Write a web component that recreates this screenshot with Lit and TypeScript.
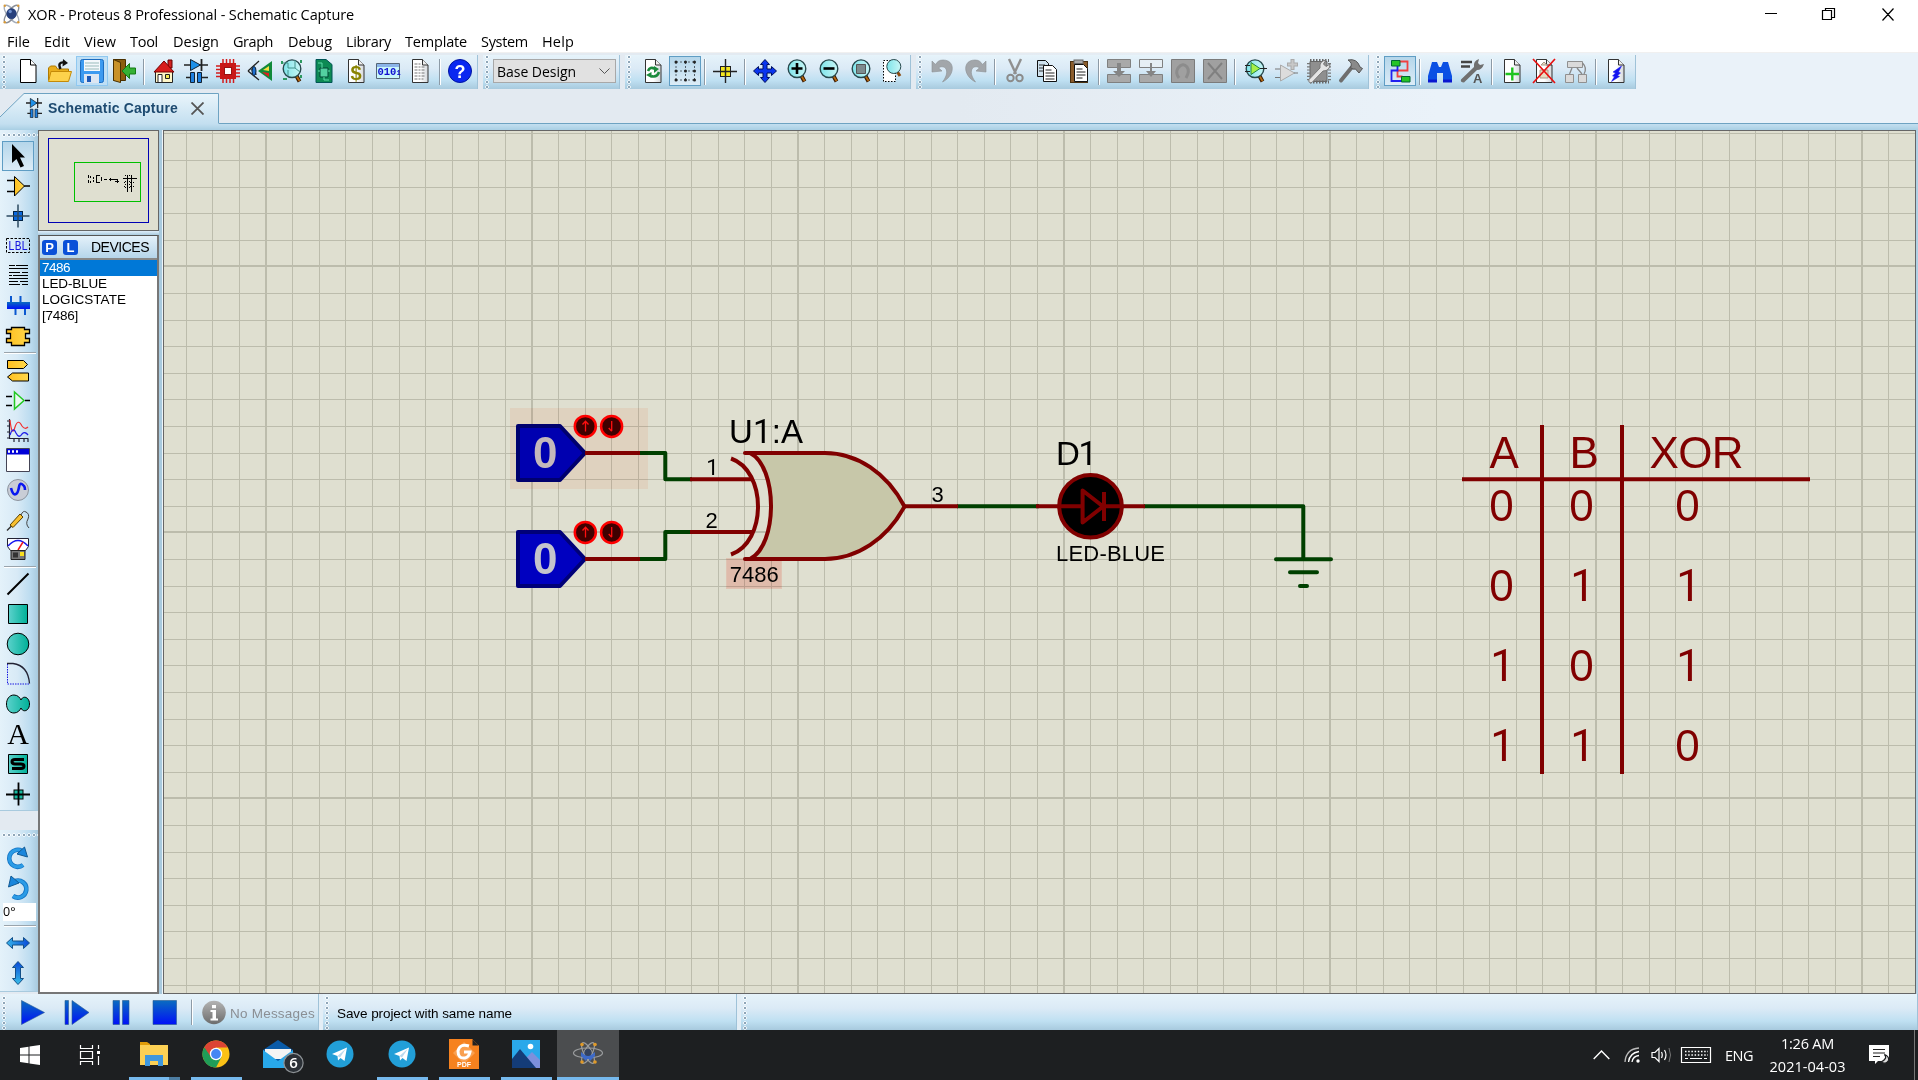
import { LitElement, html, css, svg, nothing } from "lit";
import { customElement, property } from "lit/decorators.js";

/** Text run spaced out to an exact advance width. */
@customElement("fit-label")
class FitLabel extends LitElement {
  @property() text = "";
  @property({ type: Number }) width = 0;
  static styles = css`
    :host { display: inline-block; white-space: pre; }
    .run { display: inline-block; }
  `;
  firstUpdated() {
    const run = this.renderRoot.querySelector(".run") as HTMLElement;
    const natural = run.getBoundingClientRect().width;
    if (natural && this.width) {
      run.style.letterSpacing = `${(this.width - natural) / this.text.length}px`;
    }
  }
  render() {
    return html`<span class="run">${this.text}</span>`;
  }
}

const doc = svg`<path d="M4.500 .5h10l5.500 5.500v17.500h-15.500z" fill="url(#paper)" stroke="#333"/><path d="M14.500 .5v5.500h5.500" fill="#eee" stroke="#333"/>`;
const lens = (inner: unknown) => svg`<g transform="translate(2 0)">
  <path d="M14 16l3.500 6.500" stroke="#3a1a00" stroke-width="4"/><path d="M14.500 17l3 5" stroke="#b86a10" stroke-width="1.800"/>
  <circle cx="10" cy="9.700" r="8.800" fill="url(#glass)" stroke="#27484c" stroke-width="1.400"/>${inner}</g>`;
const capDiode = svg`
  <path d="M0 6h24M2 18.500h7M15 18.500h9" stroke="#222" stroke-width="1.600"/>
  <path d="M6.500 .5l10 5.500-10 5.500z" fill="#1e90e8" stroke="#123"/><path d="M17.500 0v12" stroke="#222" stroke-width="1.800"/>
  <path d="M6.500 13.500h4v10h-4zM13.500 13.500h4v10h-4z" fill="#1e80e0" stroke="#123"/>`;
const block = (y: number, h: number) => svg`<path d="M.5 ${y}.5h23v${h}h-23z" fill="#a9a9a9" stroke="#808080"/>`;

const icons: Record<string, unknown> = {
  fresh: svg`<path d="M4.500 .5h10l5.500 5.500v17.500h-15.500z" fill="#fff" stroke="#000"/><path d="M14.500 .5v5.500h5.500" fill="#fff" stroke="#000"/>`,
  open: svg`<path d="M.5 21V9l2-2h5l2 3h11v11z" fill="#e9ae1c" stroke="#b07a00"/><path d="M.5 22.500l2.500-10h20.500l-3 10z" fill="#fdd24c" stroke="#c48a08"/><path d="M12.500 10C10 5 12 3 16 3.500" fill="none" stroke="#111" stroke-width="2.400"/><path d="M15 0l5 4-5.500 3.500z" fill="#111"/>`,
  save: svg`<rect x=".5" y=".5" width="23" height="23" rx="2" fill="#3d9af0" stroke="#1c6cc0"/><rect x="4" y="1" width="16" height="11" fill="#f4f8fc"/><path d="M5 4h14M5 7h14M5 10h14" stroke="#9bb" /><rect x="4" y="15" width="15" height="9" fill="#dde6f2"/><rect x="7" y="17" width="4" height="6" fill="#1b58b8"/>`,
  exit: svg`<path d="M1.500 .5h12v21h-12z" fill="#8a5d10" stroke="#4a3000"/><path d="M1.500 .5l7 3v20l-7-2z" fill="#c8922a" stroke="#4a3000"/><path d="M23.500 9v6h-6v4.500L10 12l7.500-7.500V9z" fill="#35b135" stroke="#157a15"/>`,
  home: svg`<path d="M16 1h4v8h-4z" fill="#d02020" stroke="#600"/><path d="M3.500 12h17v11.500h-17z" fill="#fff6c8" stroke="#222"/><path d="M12 2L2 13h20z" fill="#d81c1c" stroke="#700"/><path d="M6 15.500h4v8H6z" fill="#fff" stroke="#222"/><path d="M13.500 15.500h4v4h-4z" fill="#f4e850" stroke="#222"/>`,
  schem: capDiode,
  chip: svg`<path d="M7 0v24M10.500 0v24M14 0v24M17.500 0v24M0 7h24M0 10.500h24M0 14h24M0 17.500h24" stroke="#d21c1c" stroke-width="1.500"/><rect x="4" y="4" width="16" height="16" fill="#c81818"/><rect x="8.500" y="8.500" width="7" height="7" fill="#fff" stroke="#911"/>`,
  eye: svg`<path d="M0 12L11 2M0 12l11 9M3 11q4-2 5 5" stroke="#222" fill="none" stroke-width="1.300"/><ellipse cx="6" cy="12" rx="2" ry="4.500" fill="#1e70d0" stroke="#123"/><path d="M10 12L24 2v20z" fill="#118a3a"/><path d="M15 11l6-4v5z" fill="#f4e040"/><path d="M14 13l7 1v4z" fill="#e02020"/>`,
  board: svg`${lens(svg`<path d="M1 4h5v5h7M13 1v8l5 4M6 17v-6" stroke="#43938c" fill="none"/>`)}<path d="M2 2v3M21 1v3M3 20h4M21 16v3" stroke="#2d9a60" stroke-width="2"/>`,
  green: svg`<path d="M4 .5h10l6 5v18H4z" fill="#0d8a54" stroke="#055"/><path d="M8 9h8v9H8z" fill="#53d0a0" stroke="#043"/><path d="M6 4h4v5M6 12h2M16 12h2M12 18v3h5" stroke="#5fdca8" fill="none"/>`,
  bill: svg`${doc}<text x="12" y="21" font-size="20" font-weight="700" text-anchor="middle" fill="#8a8400" font-family="Liberation Sans, sans-serif">$</text>`,
  bits: svg`<path d="M.5 4.500h23v15H.5z" fill="#c8f6fa" stroke="#567"/><path d="M1 5h22v3H1z" fill="#8ab4e8"/><text x="1.500" y="16" font-size="10.500" font-weight="700" fill="#1010d0" font-family="Liberation Mono, monospace">010<tspan font-size="7">1</tspan></text>`,
  report: svg`${doc}<path d="M6.500 5h6M6.500 8h11M6.500 11h11M6.500 14h11M6.500 17h11M6.500 20h9" stroke="#777" stroke-width="1.100" stroke-dasharray="3 1 2 1"/>`,
  help: svg`<circle cx="12" cy="12" r="11.500" fill="#0a28f0" stroke="#0014a0"/><text x="12" y="18.500" font-size="18" font-weight="700" text-anchor="middle" fill="#fff" font-family="Liberation Sans, sans-serif">?</text>`,
  redraw: svg`${doc}<path d="M7 12q2-5 7-2M18 13q-2 6-8 4" fill="none" stroke="#1b8a3c" stroke-width="2.600"/><path d="M13 7l5 3-5 4zM10.500 13v6L5 16z" fill="#1b8a3c"/>`,
  dots: svg`<path d="M3 3h19M3 12h19M3 21h19M3 3v18M12.500 3v18M21.500 3v18" stroke="#55606a" stroke-dasharray="2 2"/><g fill="#222">${[3, 12, 21].map((y) => [3, 12.5, 21.5].map((x) => svg`<circle cx=${x} cy=${y} r="1.500"/>`))}</g>`,
  origin: svg`<rect x="7.500" y="7.500" width="10" height="10" fill="#f6e81e" stroke="#222"/><path d="M0 12.500h24M12.500 0v24" stroke="#222" stroke-width="1.400"/>`,
  pan: svg`<path d="M12 .5l4.500 5h-2.500V10h4.500V7.500l5 4.500-5 4.500V14H14v4.500h2.500L12 23.500 7.500 18.500H10V14H5.500v2.500L.5 12l5-4.500V10H10V5.500H7.500z" fill="#0b35ee" stroke="#001060"/>`,
  zin: lens(svg`<path d="M4.500 9.500h11M10 4v11" stroke="#000" stroke-width="2.600"/>`),
  zout: lens(svg`<path d="M4.500 9.500h11" stroke="#000" stroke-width="2.600"/>`),
  zall: lens(svg`<path d="M5.500 5.500h9v9h-9z" fill="#7d8c8e" stroke="#555"/>`),
  zarea: svg`<path d="M2.500 1.500h12v21h-12z" fill="#fff" stroke="#000" stroke-dasharray="1.500 1.500"/><path d="M16.500 13l2.500 4" stroke="#8a4a10" stroke-width="3"/><circle cx="12.800" cy="7.500" r="7" fill="url(#glass)" stroke="#27484c"/>`,
  undo: svg`<path d="M1 2v11l10-1-3.500-3.200C14 5 20 12 11.500 23 24 17 25 1 12 1 8 1 6 3 4.500 5.500z" fill="#a2a6aa" stroke="#8b9094" stroke-width=".6"/>`,
  redo: svg`<path d="M23 2v11l-10-1 3.500-3.200C10 5 4 12 12.500 23 0 17-1 1 12 1c4 0 6 2 7.500 4.500z" fill="#a2a6aa" stroke="#8b9094" stroke-width=".6"/>`,
  cut: svg`<path d="M6 0l7 15M18 0l-7 15" stroke="#909090" stroke-width="2.400"/><circle cx="7.500" cy="19" r="3.200" fill="none" stroke="#8b8b8b" stroke-width="2"/><circle cx="16.500" cy="19" r="3.200" fill="none" stroke="#8b8b8b" stroke-width="2"/>`,
  copy: svg`<path d="M2.500 1.500h8l3 3v13h-11z" fill="#cfe2ee" stroke="#111"/><path d="M4 6h6M4 9h6M4 12h6" stroke="#333"/><path d="M8.500 6.500h9l4 4v12h-13z" fill="#fff" stroke="#111"/><path d="M10.500 11h6M10.500 14h9M10.500 17h9M10.500 20h9" stroke="#222"/>`,
  paste: svg`<rect x="3.500" y="2.500" width="17" height="21" fill="#8a5c2c" stroke="#4a3010"/><path d="M7.500 5.500h9l4 4v13h-13z" fill="#fff" stroke="#111"/><path d="M9.500 10h6M9.500 13h9M9.500 16h9M9.500 19h6" stroke="#222"/><rect x="7" y="1" width="9" height="3.500" fill="#aaa" stroke="#666"/>`,
  blkcopy: svg`${block(0, 8)}${block(15, 8)}<path d="M10 4h4v8h4l-6 6-6-6h4z" fill="#858585"/>`,
  blkmove: svg`<path d="M.5 .5h23v8H.5z" fill="#e6eef4" stroke="#808080"/>${block(15, 8)}<path d="M11 4h2v8h4l-5 6-5-6h4z" fill="#858585"/>`,
  blkrot: svg`<path d="M.5 .5h23v23H.5z" fill="#a0a0a0" stroke="#7b7b7b"/><path d="M8 19q-4-5-1-10 5-6 9-1 3 4-1 11" fill="none" stroke="#8c8c8c" stroke-width="3"/>`,
  blkdel: svg`<path d="M.5 .5h23v23H.5z" fill="#a0a0a0" stroke="#7b7b7b"/><path d="M5 4l14 16M19 4L5 20" stroke="#808080" stroke-width="2"/>`,
  pick: lens(svg`<path d="M6 3.500l9 6-9 6z" fill="#a6f048" stroke="#284"/><path d="M0 6.500h5M0 12.500h5M15 9.500h7" stroke="#222"/>`),
  make: svg`<path d="M5.500 6l14 8-14 8z" fill="#dcdcdc" stroke="#aaa"/><path d="M0 10h5M0 18.500h5M19 14h4" stroke="#777"/><path d="M17.500 0v11M12 5.500h11" stroke="#aaa" stroke-width="4"/><path d="M17.500 1v9M13 5.500h9" stroke="#c8c8c8" stroke-width="2"/>`,
  pack: svg`<path d="M3 2.500h17v20H3z" fill="#8f8f8f" stroke="#666"/><path d="M3 1.500h19M3 23h19" stroke="#666" stroke-width="3" stroke-dasharray="1.500 1.500"/><path d="M1.500 4v18M22.500 4v18" stroke="#777" stroke-width="3" stroke-dasharray="1.200 2"/><path d="M2 20.500L13 9q-1-7 6-8l-2.500 4 2.500 2.500L23 5q0 7-7 7L5 23.500q-4 1-3-3z" fill="#e4e4e4" stroke="#777"/>`,
  hammer: svg`<path d="M2 21.500L13 8" stroke="#6e6e6e" stroke-width="4" stroke-linecap="round"/><path d="M9 1q9-2 12 7l2.500 1.500-3.500 4.500-3.500-4q-2.500 1-5-1.500Q14 4 9 1z" fill="#8a8a8a" stroke="#555"/>`,
  auto: svg`<path d="M12 2.500h7.500v9h-10v6h5" fill="none" stroke="#f04040" stroke-width="1.800"/><path d="M9.500 7v4.500H3.500v10.500H13" fill="none" stroke="#2020f0" stroke-width="1.800"/><path d="M3.500 1.500h8.500v5.500H3.500zM13.500 17.500h8.500v5.500h-8.500z" fill="#25c425" stroke="#063"/>`,
  find: svg`<path d="M4 3h5l2 5h2l2-5h5l4 14v4h-9v-7h-6v7H0v-4z" fill="#0a50e4"/><path d="M0 22h9M15 22h9" stroke="#0a18d0" stroke-width="3"/>`,
  props: svg`<path d="M1 3h11M1 7.500h9" stroke="#444" stroke-width="2.600"/><path d="M1 20.500L14 8q-1-6 5-8l-1 4 2 2 4-1q-2 6-7 6L4 23.500q-4 0-3-3z" fill="#707070"/><text x="13" y="24" font-size="13" font-weight="700" fill="#555" font-family="Liberation Sans, sans-serif">A</text>`,
  sheetadd: svg`${doc}<path d="M5.500 15h13.500M12.300 8.500v13" stroke="#1fc41f" stroke-width="2.400"/>`,
  sheetdel: svg`${doc}<path d="M9 6l3-3 3 3zM8 11h8v8H8z" fill="#e8dcc0" stroke="#a98"/><path d="M1 0l22 24M23 0L1 24" stroke="#e81010" stroke-width="1.700"/>`,
  hier: svg`<path d="M3.500 2.500h15v6h-15zM1.500 15.500h8v8h-8zM14.500 15.500h8v8h-8z" fill="#dadada" stroke="#909090"/><path d="M8 9l-2.500 6M18.500 4q5 5 1.500 11M13 9l5 6" fill="none" stroke="#888" stroke-width="1.300"/>`,
  erc: svg`${doc}<path d="M17.500 7l-8.500 6 2.500 1-3 3 2 .5-3 5 8-5-2-1 3-2.500-2-1z" fill="#1414f0" stroke="#1414f0" stroke-width=".5"/>`,

  arrow: svg`<path d="M6 0v19l4.500-4 4 8.500 3.500-1.500-4-8.500h5z" fill="#000"/>`,
  comp: svg`<path d="M1 6.500h7M1 17.500h7M18 12h6" stroke="#000" stroke-width="1.300"/><path d="M8.500 2.500l10 9.500-10 10z" fill="url(#gold)" stroke="#000"/>`,
  junction: svg`<rect x="7.500" y="7.500" width="9" height="9" fill="#0868e0" stroke="#024"/><path d="M.5 12h23M12 .5v23" stroke="#2c4a60" stroke-width="1.500"/>`,
  label: svg`<path d="M.5 4.500h23v14H.5z" fill="none" stroke="#000" stroke-dasharray="2.500 1.500"/><text x="2" y="16" font-size="12.500" fill="#1616e0" font-family="Liberation Mono, monospace" textLength="20" lengthAdjust="spacingAndGlyphs">LBL</text>`,
  script: svg`<g stroke="#000"><path d="M3 1.500h6M10 1.500h12M3 4.500h19M3 8.500h11M16 8.500h6M3 11.500h3M7 11.500h15M3 14.500h19M3 17.500h9M14 17.500h8M3 20.500h11M16 20.500h6" /></g>`,
  bus: svg`<path d="M1 8h23v7H1z" fill="url(#bluev)"/><path d="M5 2v6M14.500 2v6M9.500 15v6M19 15v6" stroke="#0a58d0" stroke-width="2"/>`,
  sub: svg`<path d="M5.500 3.500h13v2h5v4h-4v5h4v4h-5v3h-13v-3h-5v-4h4v-5h-4v-4h5z" fill="url(#gold)" stroke="#000" stroke-width="1.300"/>`,
  term: svg`<path d="M1.500 2.500h16l4 4-4 4h-16z" fill="url(#gold)" stroke="#000"/><path d="M22.500 15h-16l-5 4 5 4h16z" fill="url(#gold)" stroke="#000"/>`,
  pin: svg`<path d="M0 8.500h6M0 17.500h6M19 12.500h5" stroke="#000" stroke-width="1.300"/><path d="M8.500 4l9.500 8.500-9.500 8.500z" fill="#e8f8f0" stroke="#22c822" stroke-width="1.500"/>`,
  graph: svg`<path d="M3.500 1v20M3.500 20.500h19M1 3h2M1 8h2M1 14h2M1 20h2M8 21v3M13 21v3M18 21v3M22 21v3" stroke="#223" stroke-width="1.200"/><path d="M4 2q2 18 5 7 3-9 7-1 3 4 6 1" fill="none" stroke="#f03030" stroke-width="1.200"/><path d="M4 17q3-9 6-2 3 6 6 1 3-3 6 1" fill="none" stroke="#2020e8" stroke-width="1.300"/>`,
  popup: svg`<path d="M.5 .5h23v23H.5z" fill="#fff" stroke="#445"/><path d="M1 1h22v5.500H1z" fill="#0000d8"/><path d="M2 3.500h2M6 3.500h2M10 3.500h2" stroke="#fff" stroke-width="2.500"/>`,
  gen: svg`<circle cx="12" cy="12" r="10.500" fill="#c9cdd6" stroke="#8d949e"/><path d="M5 10q2 8 5 6 2-1 3-7t5-1q1 1 1 4" fill="none" stroke="#0a18f0" stroke-width="2.600"/>`,
  probe: svg`<path d="M1 22.500l5-5" stroke="#333" stroke-width="1.500"/><path d="M4 17L14 6l3 3L7 19.500z" fill="#f8c030" stroke="#5a4000"/><path d="M15 7q2-5 5-3 4 2 2 7-3 5 1 9" fill="none" stroke="#444"/>`,
  meter: svg`<path d="M1.500 .5h21v8l-3 4h-15l-3-4z" fill="#fff" stroke="#223"/><path d="M2 8Q12-3 22 8" fill="none" stroke="#1818f0" stroke-width="1.500"/><path d="M12 12l5-8" stroke="#f01818" stroke-width="1.500"/><path d="M5 12.500h14v9H5z" fill="#777" stroke="#222"/><path d="M7 14.500h5v5H7z" fill="#333"/><path d="M14 14h4v4h-4z" fill="#f8e020"/>`,
  line: svg`<path d="M1.500 22.500l21-21" stroke="#000" stroke-width="2"/>`,
  box: svg`<path d="M2.500 2.500h19v19h-19z" fill="url(#teal)" stroke="#000"/>`,
  circle: svg`<circle cx="12" cy="12" r="10.800" fill="url(#teal)" stroke="#000"/>`,
  arc: svg`<path d="M1.500 2v20h22" fill="none" stroke="#1818e0" stroke-dasharray="1.500 1"/><path d="M1 1.500h6q15 2 16.500 20" fill="none" stroke="#223" stroke-width="1.300"/>`,
  path: svg`<path d="M8 3C-2 3-2 21 8 21c4 0 6-3 7-5 2 5 8.500 3 8.500-4S17 3 15 8c-1-2-3-5-7-5z" fill="url(#teal)" stroke="#000"/>`,
  text: svg`<text x="12" y="22" font-size="30" text-anchor="middle" font-family="Liberation Serif, serif">A</text>`,
  symbol: svg`<path d="M2.500 2.500h19v19h-19z" fill="url(#teal)" stroke="#000"/><path d="M18 7.500h-9q-3 0-3 2.200t3 2.300h6q3 0 3 2.200t-3 2.300H6" fill="none" stroke="#000" stroke-width="3"/>`,
  marker: svg`<rect x="8" y="8" width="9" height="9" fill="#18b8a0" stroke="#000"/><path d="M0 12.500h24M12.500 .5v23" stroke="#000" stroke-width="1.800"/>`,
  cw: svg`<path d="M17 19A8.500 8.500 0 1 1 16 5" fill="none" stroke="#1474c4" stroke-width="4.600"/><path d="M17 19A8.500 8.500 0 1 1 16 5" fill="none" stroke="#2c9ce6" stroke-width="3"/><path d="M18.500 1l3 10-10.500-3z" fill="#1a86dc" stroke="#125a94"/>`,
  ccw: svg`<path d="M7 20A8.500 8.500 0 1 0 9 5" fill="none" stroke="#1474c4" stroke-width="4.600"/><path d="M7 20A8.500 8.500 0 1 0 9 5" fill="none" stroke="#2c9ce6" stroke-width="3"/><path d="M5 0L2.500 11 13 7z" fill="#1a86dc" stroke="#125a94"/>`,
  fliph: svg`<path d="M.5 12l6-5.500v3.500h11V6.500l6 5.500-6 5.500V14h-11v3.500z" fill="url(#blueh)" stroke="#135088"/>`,
  flipv: svg`<path d="M12 .5l5.500 6H14.500v11h3L12 23.500l-5.500-6h3v-11h-3z" fill="url(#bluev2)" stroke="#135088"/>`,
};

const glyph = (name: string) => html`<svg class="icon" viewBox="0 0 24 24" width="24" height="24">${icons[name]}</svg>`;

const WIRE = "#004000";
const PART = "#800000";

@customElement("schematic-sheet")
class SchematicSheet extends LitElement {
  static styles = css`
    :host { display: block; overflow: hidden; background: #dfdfd0; }
    svg { display: block; }
    text { font-family: "Liberation Sans", Arial, sans-serif; }
    .one { font-family: Roboto, "Liberation Sans", sans-serif; }
    .truth text { font-size: 44px; fill: #800000; }
    .tint { mix-blend-mode: multiply; }
  `;

  private grid() {
    const lines = [];
    for (let k = 6; k < 73; k++) {
      const major = k % 10 === 0;
      lines.push(svg`<rect x=${major ? 26.6 * k - 1 : Math.floor(26.6 * k + 0.001)} y="131" width=${major ? 2 : 1} height="862"/>`);
    }
    for (let k = 5; k < 38; k++) {
      const major = k % 10 === 0;
      lines.push(svg`<rect x="164" y=${major ? 26.6 * k - 1 : Math.ceil(26.6 * k - 0.001)} width="1751" height=${major ? 2 : 1}/>`);
    }
    return svg`<g fill="#bcbcac" shape-rendering="crispEdges">${lines}</g>`;
  }

  private state(y: number) {
    return svg`
      <path d="M518 ${y - 27}h42l25 27-25 27h-42z" fill="#0000c0" stroke="#000078" stroke-width="4" stroke-linejoin="round"/>
      <text x="545.300" y=${y + 15} font-size="44" font-weight="700" text-anchor="middle" fill="#c4c4cc">0</text>
      <g fill="#400000" stroke="#ff0000" stroke-width="2.500"><circle cx="585.300" cy=${y - 26.6} r="10.500"/><circle cx="611.600" cy=${y - 26.6} r="10.500"/></g>
      <path d="M585.500 ${y - 21.5}v-10m-3 3l3-3.200 3 3.200M611.700 ${y - 32}v10m-3-3l3 3.200" fill="none" stroke="#ff1010" stroke-width="1.300"/>`;
  }

  private truth() {
    const rows = ["000", "011", "101", "110"];
    const xs = [1501.5, 1581.5, 1687.6];
    return svg`<g class="truth">
      <path d="M1542 425v349M1622 425v349M1462 479.300h348" stroke=${PART} stroke-width="4"/>
      <text x="1489.600" y="468">A</text><text x="1569.500" y="468">B</text><text x="1649.500" y="468" textLength="94">XOR</text>
      ${rows.map((r, i) => [...r].map((c, j) => svg`<text class=${c === "1" ? "one" : ""} x=${xs[j] + (c === "1" ? 1 : 0)} y=${520.5 + 80 * i} text-anchor="middle">${c}</text>`))}
    </g>`;
  }

  render() {
    return html`<svg width="1751" height="862" viewBox="164 131 1751 862">
      <path d="M164 131h1751v862H164z" fill="#dfdfd0"/>
      ${this.grid()}
      ${this.state(453)}
      ${this.state(559)}
      <g fill="none" stroke-width="4" stroke=${WIRE} stroke-linejoin="round">
        <path d="M638 453h27.300v26.300H692M638 559h27.300v-27H692M957 506.300h82M1144 506.300h159.300V559"/>
        <path d="M1276 559.200h55M1290 572.300h27M1300 586h7" stroke-linecap="round"/>
      </g>
      <g fill="none" stroke-width="4" stroke=${PART} stroke-linejoin="round">
        <path d="M585 453h55M585 559h55M690 479.300h63M690 532h63M904 506.300h54"/>
        <path d="M745 453h80C857 453 887 473 904.500 506.500C887 539 857 559 825 559H745h5C778 545 778 467 750 453z" fill="#c7c7a9"/>
        <path d="M731 458.500C767 471 767 542 731 554.500"/>
        <circle cx="1090.500" cy="506.300" r="31.300" fill="#000"/>
        <path d="M1036 506.300h47M1104 506.300h41M1082.600 490.500v32l20.500-16zM1104 492v29"/>
      </g>
      <text class="one" x="712.500" y="475" font-size="22" text-anchor="middle">1</text>
      <text x="711.700" y="528" font-size="22" text-anchor="middle">2</text>
      <text x="937.600" y="501.500" font-size="22" text-anchor="middle">3</text>
      <text x="729" y="442.500" font-size="33" textLength="74">U<tspan class="one">1</tspan>:A</text>
      <text x="1056" y="465" font-size="33" textLength="41">D<tspan class="one">1</tspan></text>
      <text x="1056" y="561" font-size="22" textLength="109">LED-BLUE</text>
      <text x="729.800" y="582" font-size="22" textLength="49">7486</text>
      <rect class="tint" x="726.500" y="558.500" width="55" height="30" fill="#ffd6d2" stroke="#ffe0dc"/>
      <rect class="tint" x="510.500" y="408.500" width="137" height="80" fill="#fff0ea" stroke="#fff0ea"/>
      ${this.truth()}
    </svg>`;
  }
}

const MENU: [string, number, number][] = [
  ["File", 37, 23], ["Edit", 40, 26], ["View", 46, 32], ["Tool", 43, 28], ["Design", 60, 46], ["Graph", 55, 40],
  ["Debug", 58, 44], ["Library", 59, 45], ["Template", 76, 62], ["System", 61, 47], ["Help", 46, 32],
];

const MAIN_BARS: { w: number; grip: number; items: string[] }[] = [
  { w: 478, grip: 12, items: ["fresh", "open", "save*", "exit", "|", "home", "schem", "chip", "eye", "board", "green", "bill", "bits", "report", "|", "help"] },
  { w: 137, grip: 10, items: ["combo"] },
  { w: 286, grip: 12, items: ["redraw", "dots#", "|", "origin", "|", "pan", "zin", "zout", "zall", "zarea"] },
  { w: 453, grip: 11, items: ["undo", "redo", "|", "cut", "copy", "paste", "|", "blkcopy", "blkmove", "blkrot", "blkdel", "|", "pick", "make", "pack", "hammer"] },
  { w: 262, grip: 10, items: ["auto#", "|", "find", "props", "|", "sheetadd", "sheetdel", "hier", "|", "erc"] },
];

const SIDE = ["arrow#", "comp", "junction", "label", "script", "bus", "sub", "|", "term", "pin", "graph", "popup", "gen", "probe", "meter", "|",
  "line", "box", "circle", "arc", "path", "text", "symbol", "marker"];

const atom = svg`
  <g fill="none" stroke-width="2"><ellipse cx="14" cy="14" rx="15" ry="6" transform="rotate(50 14 14)" stroke="#a4adba"/><ellipse cx="14" cy="14" rx="15" ry="6" transform="rotate(-50 14 14)" stroke="#8a8f98"/></g>
  <circle cx="14" cy="13.500" r="7.500" fill="#27407c"/><circle cx="12" cy="10.500" r="2.500" fill="#6e8fce"/>
  <g fill="#d89a38"><circle cx="4" cy="2.500" r="1.800"/><circle cx="24" cy="2.500" r="1.800"/><circle cx="4" cy="25.500" r="1.800"/><circle cx="24" cy="25.500" r="1.800"/></g>`;

const telegram = svg`<circle cx="14" cy="14" r="13.500" fill="#229fd8"/><path d="M6 14L21 7.500 18.500 21l-4-3-2.500 2.500-.5-4.500z" fill="#fff"/><path d="M11.500 16L20 8.500l-6 9z" fill="#b9d9ee"/>`;

const TASKS: { art: unknown; run?: string }[] = [
  { art: svg`<path d="M0 2h7l3 2v20H0z" fill="#e09c08"/><path d="M0 5h28v20H0z" fill="#fcd054"/><path d="M5 26V15h18v11h-5v-5h-8v5z" fill="#3f97dd"/>`, run: "split" },
  { art: svg`<circle cx="14" cy="14" r="13.500" fill="#fbc116"/><path d="M14 14L2.300 7.200A13.500 13.500 0 0 0 14 27.500L19.500 17z" fill="#1f9d58"/><path d="M2.300 7.200A13.500 13.500 0 0 1 25.700 7.500H14L9 17z" fill="#dc4434"/><circle cx="14" cy="14" r="6.200" fill="#fff"/><circle cx="14" cy="14" r="4.900" fill="#4486f4"/>`, run: "on" },
  { art: svg`<path d="M-1 10L14 0l15 10v18H-1z" fill="#0a5ba8"/><path d="M1 9h26v10H1z" fill="#f4f4f4"/><path d="M-1 10l15 11 15-11v18H-1z" fill="#28a8ea"/><circle cx="29.500" cy="23" r="9.600" fill="#2b3036" stroke="#8d9296" stroke-width="1.200"/><text x="29.500" y="28.300" font-size="15" font-weight="600" text-anchor="middle" fill="#fff" font-family="Open Sans, sans-serif">6</text>` },
  { art: telegram },
  { art: telegram, run: "on" },
  { art: svg`<path d="M-1-1h23l7 7v23H-1z" fill="#f6821f"/><path d="M22-1v7h7" fill="#222" stroke="#f6821f"/><path d="M14 2l11 11-11 11L3 13z" fill="#f9a050"/><path d="M19 6q-9-3-11 5 0 8 7 7 4-1 5-6h-6" fill="none" stroke="#fff" stroke-width="3"/><text x="14" y="27" font-size="7" font-weight="700" text-anchor="middle" fill="#fff" font-family="Liberation Sans, sans-serif">PDF</text>`, run: "on" },
  { art: svg`<path d="M0 0h28v28H0z" fill="#2aa8ea"/><path d="M14 18l6-6 8 8v8H14z" fill="#7d90dc"/><path d="M0 19L8 9l16 19H0z" fill="#143c78"/><circle cx="18.500" cy="6.500" r="2.800" fill="#fff"/>`, run: "on" },
  { art: svg`<g fill="none" stroke="#9a9c9e" stroke-width="1.200"><ellipse cx="14" cy="13" rx="14.500" ry="5"/><ellipse cx="14" cy="13" rx="11.500" ry="4" transform="rotate(62 14 13)"/><ellipse cx="14" cy="13" rx="11.500" ry="4" transform="rotate(-62 14 13)"/></g><path d="M7 12l4 3h6l4-3v4l-5 5-1-2h-2l-1 2-5-5z" fill="#3d6ac8"/><circle cx="14" cy="12.500" r="3.500" fill="#33425e"/><g fill="#e09a28"><circle cx="8" cy="4.500" r="1.800"/><circle cx="21" cy="4.500" r="1.800"/><circle cx="8" cy="22" r="1.800"/><circle cx="21" cy="22" r="1.800"/></g>`, run: "active" },
];

@customElement("app-root")
class AppRoot extends LitElement {
  static styles = css`
    :host { display: block; width: 1918px; height: 1080px; overflow: hidden; font-family: "Open Sans", "Noto Sans", sans-serif; color: #000; --bar: linear-gradient(#e6f3fa, #dbeaf6 40%, #bfe0f2 75%, #a8cade); --vbar: linear-gradient(90deg, #e4f2fa, #d8eaf6 45%, #bcdcf0 80%, #a8cade); }
    * { box-sizing: border-box; }
    .window { display: flex; flex-direction: column; width: 1918px; height: 1080px; background: #e3eaf1; }
    .defs { display: block; width: 0; height: 0; flex: none; }
    .icon { display: block; overflow: visible; }
    .title { display: flex; align-items: center; height: 30px; background: #fff; padding: 0 0 2px 2px; font-size: 14.500px; flex: none; }
    .title .name { margin-left: 7px; flex: 1; }
    .winbtns { display: flex; }
    .winbtns svg { display: block; }
    .menu { display: flex; align-items: center; height: 22px; background: #fff; padding-left: 7px; font-size: 14.500px; flex: none; }
    .entry { display: block; flex: none; }
    .bars { display: flex; gap: 5px; height: 37px; padding-top: 2px; flex: none; background: linear-gradient(90deg, #e3eaf1 50%, #eaf2f9 75%); border-top: 1px solid #f0f0f0; }
    .bar { display: flex; align-items: stretch; background: var(--bar); border-right: 1px solid #9fc2d8; height: 34px; flex: none; }
    .grip { width: 12px; flex: none; background: radial-gradient(circle at 2px 2px, #8fa6b8 1px, #fff 1.400px, transparent 2px) 2px 0 / 5px 5px repeat-y; }
    .btn { width: 32px; height: 30px; margin-top: 1px; display: grid; place-items: center; flex: none; border: 1px solid transparent; }
    .btn.hot { background: #bfdff5; border-color: #90c8f0; }
    .btn.down { background: linear-gradient(#b5d6ea, #dcecf7); border-color: #5f9dc4; }
    .sep { width: 8px; flex: none; display: flex; justify-content: center; padding: 4px 0; }
    .sep::before { content: ""; width: 2px; background: linear-gradient(90deg, #8d9aa6 50%, #fff 50%); }
    .combo { display: flex; align-items: center; justify-content: space-between; width: 123px; height: 24px; margin-top: 4px; border: 1px solid #a8a8a8; background: #e1e1e1; padding: 0 5px 0 3px; font-size: 14px; }
    .tabs { display: flex; height: 35px; flex: none; background: linear-gradient(90deg, #e3eaf1 50%, #eaf2f9 75%); }
    .tab { display: grid; width: 219px; }
    .tab > * { grid-area: 1 / 1; }
    .tabfill { flex: 1; border-bottom: 1px solid #6ea3c2; }
    .tabrow { display: flex; align-items: center; padding: 3px 0 0 26px; font: 700 14px "Liberation Sans", Arial, sans-serif; color: #1d4a70; }
    .tabrow fit-label { margin-left: 6px; width: 130px; }
    .tabrow .close { margin-left: 13px; }
    .strip { height: 6px; background: linear-gradient(#c3dff0, #a9cfe4); flex: none; }
    .main { display: flex; height: 864px; flex: none; }
    .side { width: 38px; display: flex; flex-direction: column; }
    .vbar { background: var(--vbar); border-bottom: 1px solid #a8cade; padding-left: 2px; }
    .vbar.tools { height: 681px; }
    .vbar.turn { height: 162px; margin-top: 19px; }
    .vgrip { height: 11px; background: radial-gradient(circle at 2px 2px, #8fa6b8 1px, #fff 1.400px, transparent 2px) 0 3px / 5px 5px repeat-x; }
    .turn .vgrip { height: 13px; }
    .vbar .btn { margin: 0; }
    .vsep { height: 4px; margin: 0 2px; background: linear-gradient(transparent 25%, #9aa4ac 25% 50%, #fff 50% 75%, transparent 75%); }
    .angle { height: 18px; width: 33px; margin: 0 0 3px 1px; background: #fff; font-size: 12.500px; line-height: 17px; }
    .panel { width: 121px; display: flex; flex-direction: column; }
    .mini { height: 101px; border: 1px solid #666; background: #dfdfd0; flex: none; }
    .mini svg { display: block; }
    .gap { height: 4px; background: linear-gradient(#dfeefa, #a9cade); flex: none; }
    .list { flex: 1; border: 2px solid #777; border-top: 1px solid #555; background: #fff; font-family: "Liberation Sans", Arial, sans-serif; font-size: 13.500px; }
    .head { display: flex; align-items: center; height: 24px; background: linear-gradient(#e4f1fa, #b5d5ea); border-bottom: 2px solid #888; padding-left: 2px; font-size: 14px; }
    .tag { width: 15px; height: 15px; border-radius: 3px; background: #0a50d8; color: #fff; font-weight: 700; font-size: 13px; line-height: 15px; text-align: center; margin-right: 6px; }
    .head fit-label { margin-left: 7px; }
    .dev { height: 16px; line-height: 16px; padding-left: 2px; }
    .dev.sel { background: #0078d7; color: #fff; }
    .split { width: 4px; background: linear-gradient(90deg, #a9cade 70%, #eef5fa 70%); }
    .frame { border: 1px solid #666; width: 1753px; }
    .edge { flex: 1; background: #b0d0e4; }
    .status { display: flex; height: 36px; gap: 4px; flex: none; font: 13.500px "Liberation Sans", Arial, sans-serif; background: #e3eef6; }
    .status .bar { height: 36px; align-items: center; }
    .status .grip { height: 34px; align-self: flex-end; }
    .status fit-label { padding-top: 2px; }
    .run { width: 319px; }
    .status .hint { width: 414px; }
    .status .rest { flex: 1; }
    .muted { color: #8b8f94; margin-left: 2px; }
    .hint fit-label { margin-left: 2px; }
    .taskbar { display: flex; height: 50px; background: #1d1f21; flex: none; color: #fff; }
    .cell { width: 62px; display: grid; place-items: center; flex: none; }
    .cell svg { display: block; overflow: visible; }
    .lead { width: 60px; }
    .lead + .task { margin-left: 3px; }
    .task { grid-template-rows: 47px 3px; width: 62px; }
    .under { width: 51px; height: 3px; background: #76b9ed; }
    .split-run { background: linear-gradient(90deg, #76b9ed 78%, #4d7da2 78%); }
    .active { background: #4b4d4f; }
    .active .under { width: 62px; }
    .space { flex: 1; }
    .tray { display: flex; align-items: center; width: 325px; font-size: 14.500px; flex: none; }
    .tray svg { display: block; flex: none; }
    .eng { margin-left: 13px; width: 29px; }
    .clock { display: flex; flex-direction: column; align-items: center; width: 77px; margin-left: 15px; }
    .clock fit-label { height: 23px; line-height: 24px; }
    .note { margin-left: 23px; }
    .show { width: 4px; height: 50px; border-left: 1px solid #777; margin-left: auto; }
  `;

  private tool(code: string) {
    if (code === "|") return html`<div class="sep"></div>`;
    if (code === "combo")
      return html`<div class="combo"><fit-label text="Base Design" width="79"></fit-label>
        <svg width="11" height="7"><path d="M.5 .5l5 5 5-5" fill="none" stroke="#555"/></svg></div>`;
    const name = code.replace(/[*#]/, "");
    const mode = code.endsWith("*") ? "btn hot" : code.endsWith("#") ? "btn down" : "btn";
    return html`<div class=${mode}>${glyph(name)}</div>`;
  }

  private defs() {
    return html`<svg class="defs"><defs>
      <linearGradient id="paper"><stop offset=".5" stop-color="#fff"/><stop offset="1" stop-color="#d4d8dc"/></linearGradient>
      <linearGradient id="glass"><stop offset="0" stop-color="#7fe4ea"/><stop offset="1" stop-color="#c8f6f6"/></linearGradient>
      <linearGradient id="gold"><stop offset="0" stop-color="#ffc020"/><stop offset="1" stop-color="#ffd84c"/></linearGradient>
      <linearGradient id="teal"><stop offset="0" stop-color="#5cd2cc"/><stop offset="1" stop-color="#00b098"/></linearGradient>
      <linearGradient id="blueh"><stop offset="0" stop-color="#38b4e8"/><stop offset="1" stop-color="#0848d8"/></linearGradient>
      <linearGradient id="bluev" x2="0" y2="1"><stop offset="0" stop-color="#0a6cc0"/><stop offset="1" stop-color="#0010f8"/></linearGradient>
      <linearGradient id="bluev2" x2="0" y2="1"><stop offset="0" stop-color="#0848d8"/><stop offset="1" stop-color="#38c0e8"/></linearGradient>
      <linearGradient id="tabfill" x2="0" y2="1"><stop offset="0" stop-color="#eaf5fb"/><stop offset="1" stop-color="#c3dff0"/></linearGradient>
      <linearGradient id="ball" x2="0" y2="1"><stop offset="0" stop-color="#b4b4b4"/><stop offset="1" stop-color="#6c6c6c"/></linearGradient>
    </defs></svg>`;
  }

  private mini() {
    return html`<svg width="119" height="99" viewBox="39 131 119 99">
      <rect x="48.500" y="138.500" width="100" height="84" fill="none" stroke="#0000b4"/>
      <rect x="74.500" y="162.500" width="66" height="39" fill="none" stroke="#00c000"/>
      <g stroke="#000" fill="none" shape-rendering="crispEdges">
        <path d="M88.500 175v3M88.500 180v3M90.500 176v2M90.500 181v2M93.500 177v2M93.500 180v2M96.500 175v8M96.500 175.500h3M96.500 182.500h3M101.500 177v4M104 179.500h3M109 179.500h9M110.500 178v3M117.500 179v4M115 181.500h4"/>
        <path d="M123 178.500h14M127.500 175v17M131.500 175v17"/><path d="M125.500 175v14M129.500 175v14" stroke-dasharray="1 2"/><path d="M124 182.500h10M124 186.500h10" stroke-dasharray="1 2"/>
      </g></svg>`;
  }

  private taskbar() {
    return html`<div class="taskbar">
      <div class="cell lead"><svg width="20" height="20"><path d="M0 3l8.500-1.200v7.700H0zM9.500 1.600L20 0v9.500H9.500zM0 10.500h8.500v7.700L0 17zM9.500 10.500H20V20L9.500 18.500z" fill="#fff"/></svg></div>
      <div class="cell lead"><svg width="20" height="20"><path d="M.5 0v3.500h12V0M.5 20v-3.500h12V20M.5 6.500h12v7H.5zM18.500 0v4M18.500 11v9" fill="none" stroke="#fff" stroke-width="1.200"/><path d="M17 6h3v3h-3z" fill="#fff"/></svg></div>
      ${TASKS.map((t) => html`<div class="cell task ${t.run === "active" ? "active" : ""}">
        <svg width="28" height="28">${t.art}</svg>
        ${t.run ? html`<div class="under ${t.run === "split" ? "split-run" : ""}"></div>` : nothing}</div>`)}
      <div class="space"></div>
      <div class="tray">
        <svg width="17" height="10"><path d="M.7 9L8.500 1l7.800 8" fill="none" stroke="#fff" stroke-width="1.400"/></svg>
        <svg width="57" height="18" viewBox="0 0 57 18"><g fill="none" stroke="#bbb" stroke-width="1.300"><path d="M15 16Q16 3 29 2"/><path d="M18.500 16Q19.500 7 29 5.500" stroke="#fff"/><path d="M22 16Q23 10 29 9.500" stroke="#fff"/></g><circle cx="28" cy="15" r="1.700" fill="#fff"/>
          <path d="M42 6.500h3l4-4v13l-4-4h-3zM51.500 6q1.500 3 0 6M54.500 4q3 5 0 10" fill="none" stroke="#fff" stroke-width="1.200"/></svg>
        <svg width="45" height="18"><path d="M3 2q3 7 0 14" transform="translate(-1 0)" fill="none" stroke="#777"/><path d="M14.500 1.500h29v15h-29z" fill="none" stroke="#fff" stroke-width="1.200"/><path d="M18 5.500h23M18 9h23" stroke="#fff" stroke-width="1.300" stroke-dasharray="1.500 1.700"/><path d="M18 12.500h3M23 12.500h12M37 12.500h3" stroke="#fff" stroke-width="1.200"/></svg>
        <fit-label class="eng" text="ENG" width="28"></fit-label>
        <div class="clock"><fit-label text="1:26 AM" width="53"></fit-label><fit-label text="2021-04-03" width="76"></fit-label></div>
        <svg class="note" width="21" height="21"><path d="M0 0h20v16H9l-3 3v-3H0z" fill="#fff"/><path d="M4 4.500h12M4 8h12M4 11.500h7" stroke="#222" stroke-width="1.200"/><path d="M15.500 9.500q3.500 4-3.500 7.500 5 3 7.500-1.500 1-4-4-6z" fill="#ddd" stroke="#1d1f21" stroke-width="1.200"/></svg>
        <div class="show"></div>
      </div>
    </div>`;
  }

  render() {
    return html`<div class="window">
      ${this.defs()}
      <div class="title">
        <svg width="19" height="20" viewBox="0 0 28 28" preserveAspectRatio="none">${atom}</svg>
        <fit-label class="name" text="XOR - Proteus 8 Professional - Schematic Capture" width="326"></fit-label>
        <div class="winbtns"><svg width="154" height="20" viewBox="1764 4 154 20"><path d="M1765 13.500h12M1822.500 10.500h9v9h-9zM1825.500 10V8.500h9v9h-3M1882.500 8.500l11 12M1893.500 8.500l-11 12" fill="none" stroke="#000" stroke-width="1.200"/></svg></div>
      </div>
      <div class="menu">${MENU.map(([t, cell, w]) => html`<div class="entry" style="width:${cell}px"><fit-label text=${t} width=${w}></fit-label></div>`)}</div>
      <div class="bars">${MAIN_BARS.map((b) => html`<div class="bar" style="width:${b.w}px"><div class="grip" style="width:${b.grip}px"></div>${b.items.map((i) => this.tool(i))}</div>`)}</div>
      <div class="tabs">
        <div class="tab">
          <svg width="219" height="35"><path d="M0 35V28L24 4.500H218.500V34.500H219V35z" fill="url(#tabfill)"/><path d="M0 28L24 4.500H218.500V34.500" fill="none" stroke="#6ea3c2"/></svg>
          <div class="tabrow"><svg width="16" height="20" viewBox="0 0 24 24" preserveAspectRatio="none">${capDiode}</svg>
            <fit-label text="Schematic Capture" width="130"></fit-label>
            <svg class="close" width="13" height="13"><path d="M.5 .5l12 12M12.500 .5l-12 12" stroke="#555" stroke-width="1.800"/></svg></div>
        </div>
        <div class="tabfill"></div>
      </div>
      <div class="strip"></div>
      <div class="main">
        <div class="side">
          <div class="vbar tools"><div class="vgrip"></div>${SIDE.map((c) => (c === "|" ? html`<div class="vsep"></div>` : this.tool(c)))}</div>
          <div class="vbar turn"><div class="vgrip"></div>${this.tool("cw")}${this.tool("ccw")}<div class="angle">0°</div><div class="vsep"></div>${this.tool("fliph")}${this.tool("flipv")}</div>
        </div>
        <div class="panel">
          <div class="mini">${this.mini()}</div>
          <div class="gap"></div>
          <div class="list">
            <div class="head"><span class="tag">P</span><span class="tag">L</span><fit-label text="DEVICES" width="58"></fit-label></div>
            <div class="dev sel"><fit-label text="7486" width="28"></fit-label></div>
            <div class="dev"><fit-label text="LED-BLUE" width="65"></fit-label></div>
            <div class="dev"><fit-label text="LOGICSTATE" width="84"></fit-label></div>
            <div class="dev"><fit-label text="[7486]" width="36"></fit-label></div>
          </div>
        </div>
        <div class="split"></div>
        <div class="frame"><schematic-sheet></schematic-sheet></div>
        <div class="edge"></div>
      </div>
      <div class="status">
        <div class="bar run"><div class="grip"></div>
          <svg width="216" height="26" viewBox="12 999.500 216 26">
            <g fill="url(#bluev)" stroke="#2a5a90" stroke-width=".6"><path d="M21.500 1001l23 12-23 12zM65 1001h3.500v24H65zM72 1001l17 12-17 12zM113 1001h6.500v24h-6.500zM122.500 1001h6.500v24h-6.500zM153 1001h23.500v24H153z"/></g>
            <path d="M191.500 1000v26" stroke="#8d9aa6"/><path d="M192.500 1000v26" stroke="#fff"/>
            <circle cx="214" cy="1013" r="11.800" fill="url(#ball)"/>
            <path d="M212 1005.500h4v3.200h-4zM210.500 1010.500h5.500v8.500h2v2h-7.500v-2h2v-6.500h-2z" fill="#fff"/>
          </svg>
          <fit-label class="muted" text="No Messages" width="85"></fit-label></div>
        <div class="bar hint"><div class="grip"></div><fit-label text="Save project with same name" width="175"></fit-label></div>
        <div class="bar rest"><div class="grip"></div></div>
      </div>
      ${this.taskbar()}
    </div>`;
  }
}
